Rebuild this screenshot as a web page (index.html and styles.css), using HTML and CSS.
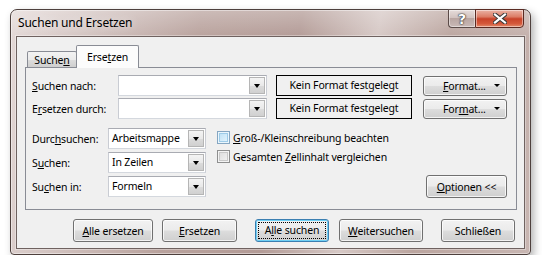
FILE: index.html
```html
<!DOCTYPE html>
<html>
<head>
<meta charset="UTF-8">
<title>Suchen und Ersetzen</title>
<link rel="stylesheet" href="styles.css">
</head>
<body>

<div id="window">
	<div id="titlebar">
		<span class="caption">Suchen und Ersetzen</span>
		<div class="capbuttons">
			<span class="capbtn help">?</span>
			<span class="capbtn close">
				<svg width="14" height="11" viewBox="0 0 14 11">
					<path d="M2 1.5 L12 9.5 M12 1.5 L2 9.5" stroke="#3a3a3a" stroke-width="4.2" stroke-linecap="square" fill="none"/>
					<path d="M2 1.5 L12 9.5 M12 1.5 L2 9.5" stroke="#fff" stroke-width="2.2" stroke-linecap="square" fill="none"/>
				</svg>
			</span>
		</div>
	</div><!-- titlebar -->

	<div id="client">
		<div id="tabs">
			<ul>
				<li>Suche<u>n</u></li>
				<li class="activetab">Erse<u>t</u>zen</li>
			</ul>
		</div><!-- tabs -->

		<div id="panel">
			<div class="row">
				<span class="lbl lbl-top"><u>S</u>uchen nach:</span>
				<div class="combo combo-long"><span class="val"></span><span class="drop"></span></div>
				<div class="fmtbox">Kein Format festgelegt</div>
				<button class="btn fmtbtn"><span><u>F</u>ormat...</span><span class="arrow"></span></button>
			</div>
			<div class="row">
				<span class="lbl lbl-top">E<u>r</u>setzen durch:</span>
				<div class="combo combo-long"><span class="val"></span><span class="drop"></span></div>
				<div class="fmtbox">Kein Format festgelegt</div>
				<button class="btn fmtbtn"><span>For<u>m</u>at...</span><span class="arrow"></span></button>
			</div>

			<div class="options">
				<div class="optcol">
					<div class="row">
						<span class="lbl">Durc<u>h</u>suchen:</span>
						<div class="combo combo-short"><span class="val">Arbeitsmappe</span><span class="drop"></span></div>
					</div>
					<div class="row">
						<span class="lbl">S<u>u</u>chen:</span>
						<div class="combo combo-short"><span class="val">In Zeilen</span><span class="drop"></span></div>
					</div>
					<div class="row row-last">
						<span class="lbl">Su<u>c</u>hen in:</span>
						<div class="combo combo-short"><span class="val">Formeln</span><span class="drop"></span></div>
					</div>
				</div>
				<div class="checks">
					<div class="check"><span class="box box-hot"></span><span><u>G</u>roß-/Kleinschreibung beachten</span></div>
					<div class="check"><span class="box"></span><span>Gesamten <u>Z</u>ellinhalt vergleichen</span></div>
				</div>
				<button class="btn optbtn"><u>O</u>ptionen &lt;&lt;</button>
			</div>
		</div><!-- panel -->

		<div id="actions">
			<button class="btn act-allrepl"><u>A</u>lle ersetzen</button>
			<button class="btn act-repl"><u>E</u>rsetzen</button>
			<button class="btn default act-allfind"><span class="focus">A<u>l</u>le suchen</span></button>
			<button class="btn act-next"><u>W</u>eitersuchen</button>
			<button class="btn act-close">Schließen</button>
		</div><!-- actions -->
	</div><!-- client -->
</div><!-- window -->

</body>
</html>
```

FILE: styles.css
```css
body {
	margin: 0;
	background: #fff;
	font: 10.5px "Noto Sans", sans-serif;
	letter-spacing: -0.15px;
	color: #000;
}

u {
	text-decoration: underline;
	text-underline-offset: 1px;
}

#window {
	box-sizing: border-box;
	width: 521px;
	height: 246px;
	margin: 9px 0 0 10px;
	border: 1px solid #4e403d;
	border-radius: 7px 7px 4px 4px;
	background:
		linear-gradient(to bottom, rgba(255,255,255,.28), rgba(255,255,255,0) 28px),
		linear-gradient(100deg, #e4d9d7 0%, #d3c4c1 14%, #b9a29d 34%, #b39b96 52%, #d6c8c5 66%, #bba59f 79%, #c8b6b2 100%);
	box-shadow: inset 0 0 0 1px rgba(255,255,255,.45), 3px 4px 9px rgba(0,0,0,.3);
	display: flex;
	flex-direction: column;
}

#titlebar {
	height: 26px;
	display: flex;
	justify-content: space-between;
	align-items: flex-start;
}

.caption {
	font-size: 12px;
	letter-spacing: -0.2px;
	line-height: 25px;
	padding-left: 7px;
	text-shadow: 0 0 8px rgba(255,255,255,.8);
}

.capbuttons {
	display: flex;
	margin: -1px 6px 0 0;
}

.capbtn {
	box-sizing: border-box;
	height: 19px;
	display: flex;
	align-items: center;
	justify-content: center;
	border: 1px solid #5b4b48;
	box-shadow: inset 0 0 0 1px rgba(255,255,255,.45);
}

.help {
	width: 27px;
	border-right: none;
	border-radius: 0 0 0 4px;
	background: linear-gradient(#e6dcda, #d2c3c0 45%, #b9a6a2 50%, #c9b9b6);
	color: #fff;
	font: bold 14px "DejaVu Sans", sans-serif;
	text-shadow: 0 0 1px #333, 0 0 1px #333, 0 0 2px #333;
}

.close {
	width: 49px;
	border-radius: 0 0 4px 0;
	border-color: #5a2a22;
	background: linear-gradient(#eab3a5, #dc7d66 40%, #c8432a 52%, #d4583a 80%, #e28b6c);
}

#client {
	flex: 1;
	margin: 0 5px 5px;
	border: 1px solid #6f6260;
	background: #f0f0f0;
	box-shadow: 0 0 0 1px rgba(255,255,255,.35);
	padding: 8px 7px 6px 8px;
	display: flex;
	flex-direction: column;
}

#tabs ul {
	list-style-type: none;
	margin: 0;
	padding: 0 0 0 2px;
	height: 22px;
	display: flex;
	align-items: flex-end;
}

#tabs li {
	box-sizing: border-box;
	height: 16px;
	width: 50px;
	border: 1px solid #898c95;
	border-bottom: none;
	border-radius: 2px 2px 0 0;
	background: linear-gradient(#f3f3f3, #ebebeb 50%, #dddddd 51%, #cfcfcf);
	text-align: center;
	line-height: 15px;
	padding-top: 1px;
}

#tabs li.activetab {
	height: 23px;
	width: 63px;
	margin-left: -1px;
	margin-bottom: -1px;
	background: #fcfcfc;
	line-height: 20px;
	position: relative;
	z-index: 1;
}

#panel {
	height: 143px;
	box-sizing: border-box;
	border: 1px solid #898c95;
	background: #f0f0f0;
	padding: 7px 0 0 6px;
}

.row {
	display: flex;
	align-items: center;
	height: 21px;
	margin-bottom: 2px;
}

.lbl {
	width: 76px;
	flex: none;
}

.lbl-top {
	width: 86px;
}

.combo {
	box-sizing: border-box;
	height: 21px;
	border: 1px solid #a9abb2;
	border-color: #a9abb2 #c9ccd3 #d4d8de #c9ccd3;
	background: #fff;
	display: flex;
	align-items: stretch;
	padding: 1px;
}

.combo-long {
	width: 149px;
}

.combo-short {
	width: 98px;
}

.val {
	flex: 1;
	padding-left: 2px;
	line-height: 17px;
}

.drop {
	box-sizing: border-box;
	width: 16px;
	border: 1px solid #b5b5b5;
	background: linear-gradient(#f4f4f4, #e9e9e9 50%, #dcdcdc 51%, #d0d0d0);
	position: relative;
}

.drop::after {
	content: "";
	position: absolute;
	left: 4px;
	top: 6px;
	border-left: 3.5px solid transparent;
	border-right: 3.5px solid transparent;
	border-top: 4px solid #000;
}

.fmtbox {
	box-sizing: border-box;
	width: 136px;
	height: 21px;
	margin-left: 9px;
	border: 1px solid #000;
	text-align: center;
	line-height: 19px;
}

.btn {
	box-sizing: border-box;
	height: 23px;
	padding: 0;
	border: 1px solid #707070;
	border-radius: 3px;
	background: linear-gradient(#f2f2f2, #ebebeb 49%, #dddddd 51%, #cfcfcf);
	box-shadow: inset 0 0 0 1px rgba(255,255,255,.75);
	font: inherit;
	letter-spacing: inherit;
	color: #000;
}

.fmtbtn {
	width: 84px;
	height: 20px;
	margin-left: 11px;
	display: flex;
	align-items: center;
	justify-content: space-between;
	padding: 0 6px 0 19px;
}

.arrow {
	border-left: 3px solid transparent;
	border-right: 3px solid transparent;
	border-top: 3px solid #000;
}

.options {
	display: flex;
	margin-top: 9px;
}

.optcol .row {
	margin-bottom: 3px;
}

.optcol .row-last {
	margin-top: 1px;
	margin-bottom: 0;
}

.checks {
	margin: 3px 0 0 11px;
	width: 198px;
}

.check {
	display: flex;
	align-items: center;
	height: 13px;
	margin-bottom: 6px;
}

.box {
	box-sizing: border-box;
	width: 13px;
	height: 13px;
	margin-right: 3px;
	border: 1px solid #8e8f8f;
	background: linear-gradient(135deg, #d9d9d9, #f6f6f6);
	box-shadow: inset 0 0 0 1px #f4f4f4, inset 0 0 0 2px #c8c8c8;
}

.box-hot {
	border-color: #85a6c2;
	background: linear-gradient(135deg, #b9def4, #e9f7fe);
	box-shadow: inset 0 0 0 1px #eaf6fd, inset 0 0 0 2px #9dcbe8;
}

.optbtn {
	width: 81px;
	align-self: flex-end;
	margin: 0 9px 0 auto;
	position: relative;
	top: 1px;
}

#actions {
	display: flex;
	margin-top: 9px;
	padding-left: 48px;
}

.act-allrepl { width: 80px; }
.act-repl { width: 75px; margin-left: 9px; }
.act-allfind { width: 74px; margin-left: 18px; }
.act-next { width: 84px; margin-left: 10px; }
.act-close { width: 74px; margin-left: 18px; }

.btn.default {
	border-color: #3c7fb1;
	box-shadow: inset 0 0 0 1px #6fd0f5;
	padding: 2px;
}

.focus {
	display: block;
	height: 100%;
	box-sizing: border-box;
	border: 1px dotted #000;
	line-height: 15px;
}
```
